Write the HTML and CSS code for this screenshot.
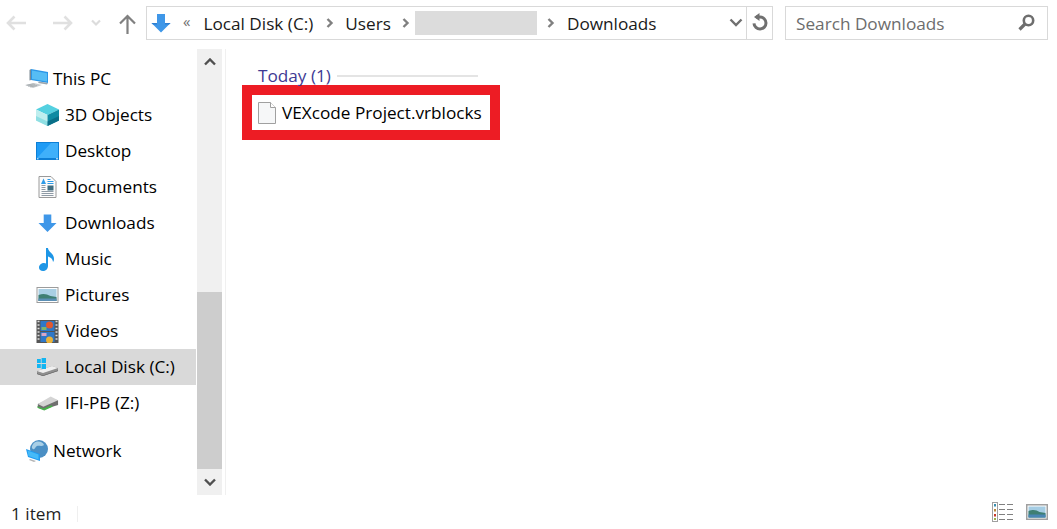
FILE: index.html
```html
<!DOCTYPE html>
<html lang="en">
<head>
<meta charset="utf-8">
<title>Downloads</title>
<link rel="stylesheet" href="styles.css">
</head>
<body>
<div class="window">
  <header class="toolbar">
    <div class="nav-buttons">
      <svg class="tb-icon back" width="22" height="20" viewBox="0 0 22 20"><path d="M21 10H2.500M9.500 3.500L3 10l6.500 6.500" fill="none" stroke="#e0e0e0" stroke-width="2.600"/></svg>
      <svg class="tb-icon forward" width="22" height="20" viewBox="0 0 22 20"><path d="M1 10h18.500M12.500 3.500L19 10l-6.500 6.500" fill="none" stroke="#e0e0e0" stroke-width="2.600"/></svg>
      <svg class="tb-icon recent" width="10" height="8" viewBox="0 0 10 8"><path d="M1 1.500l4 4 4-4" fill="none" stroke="#dcdcdc" stroke-width="2.200"/></svg>
      <svg class="tb-icon up" width="18" height="20" viewBox="0 0 18 20"><path d="M8.500 20V2M1 9.500L8.500 2 16 9.500" fill="none" stroke="#808080" stroke-width="2.200"/></svg>
    </div>
    <div class="address">
      <svg class="addr-loc" width="20" height="20" viewBox="0 0 20 20"><path d="M6 1h8v9h5.500L10 19.500 .5 10H6z" fill="#3f97e8"/><path d="M.5 10H6v1.500h-4zM19.500 10H14v1.500h4z" fill="#2f7fd0"/></svg>
      <span class="overflow">«</span>
      <span class="crumb first">Local Disk (C:)</span>
      <svg class="sep sep-a" width="8" height="10" viewBox="0 0 8 10"><path d="M1.500 1l4 4-4 4" fill="none" stroke="#808080" stroke-width="2.400"/></svg>
      <span class="crumb">Users</span>
      <svg class="sep sep-b" width="8" height="10" viewBox="0 0 8 10"><path d="M1.500 1l4 4-4 4" fill="none" stroke="#808080" stroke-width="2.400"/></svg>
      <span class="redacted"></span>
      <svg class="sep" width="8" height="10" viewBox="0 0 8 10"><path d="M1.500 1l4 4-4 4" fill="none" stroke="#808080" stroke-width="2.400"/></svg>
      <span class="crumb">Downloads</span>
      <svg class="addr-chevron" width="14" height="9" viewBox="0 0 14 9"><path d="M1.500 1.500L7 7l5.500-5.500" fill="none" stroke="#707070" stroke-width="2.400"/></svg>
      <div class="refresh">
        <svg width="18" height="20" viewBox="0 0 18 20"><path d="M5 4h4a6 6 0 1 1-6 6.300" fill="none" stroke="#707070" stroke-width="3"/><path d="M8.500 0v8L3 4z" fill="#707070"/></svg>
      </div>
    </div>
    <div class="search">
      <span class="search-text">Search Downloads</span>
      <svg width="17" height="17" viewBox="0 0 17 17"><circle cx="10.500" cy="6.500" r="4.700" fill="none" stroke="#6e6e6e" stroke-width="2.600"/><path d="M7 10l-5.500 5.500" stroke="#6e6e6e" stroke-width="3.200"/></svg>
    </div>
  </header>

  <div class="body">
    <nav class="sidebar">
      <ul class="tree">
        <li class="row root">
          <svg class="ico" width="26" height="22" viewBox="0 0 26 22"><path d="M7 1l17 3v11L7 12z" fill="#2c97e8"/><path d="M8 2.500l15 2.700v8.400L8 11z" fill="#56bdf5"/><path d="M7 1l-1.500 1v10.500L7 12z" fill="#7d8a94"/><path d="M24 15l-9-1.500-1 1.500 9 1.500z" fill="#9aa5ad"/><path d="M1 17l9-2 8 2-9 3z" fill="#c5cacd"/><path d="M2.500 17.300l7-1.500M4 18.200l7-1.500M6 19l7-1.500" stroke="#9ea3a6" stroke-width=".7"/></svg>
          <span class="label">This PC</span>
        </li>
        <li class="row">
          <svg class="ico" width="23" height="22" viewBox="0 0 23 22"><path d="M11.500 0L23 5.500 11.500 11 0 5.500z" fill="#54d0e0"/><path d="M0 5.500L11.500 11v11L0 16.500z" fill="#bfeeee"/><path d="M23 5.500L11.500 11v11L23 16.500z" fill="#0f8ba3"/><path d="M0 12l11.500 5.500V22L0 16.500z" fill="#8fdfe3"/><path d="M23 12l-11.500 5.500V22L23 16.500z" fill="#0a6f88"/></svg>
          <span class="label">3D Objects</span>
        </li>
        <li class="row">
          <svg class="ico" width="23" height="18" viewBox="0 0 23 18"><rect width="23" height="18" fill="#0d7fd6"/><rect x="1" y="1" width="21" height="15" fill="#1e9bf5"/><path d="M1 16L15 1h7v15z" fill="#3fb0fa"/><path d="M1 16.800h1.500M20 16.800h2" stroke="#e8f4fd" stroke-width="1"/></svg>
          <span class="label">Desktop</span>
        </li>
        <li class="row">
          <svg class="ico doc" width="18" height="22" viewBox="0 0 18 22"><path d="M.5.500h12l5 5v16H.5z" fill="#fbfbfb" stroke="#9a9a9a"/><path d="M9 3.500h3M9 5.500h6M9 7.500h6" stroke="#2d9be8"/><path d="M3 9.500h4M3 11.500h4M3 13.500h4M3 15.500h12M3 17.500h12M3 19.500h12" stroke="#8e9aa5"/><path d="M2.500 8l2.500-5.500L7.500 8z" fill="#2d9be8"/><rect x="9" y="9.500" width="6" height="5" fill="#3f6d80"/></svg>
          <span class="label">Documents</span>
        </li>
        <li class="row">
          <svg class="ico dl" width="20" height="20" viewBox="0 0 20 20"><path d="M6 1h8v9h5.500L10 19.500 .5 10H6z" fill="#3f97e8"/></svg>
          <span class="label">Downloads</span>
        </li>
        <li class="row">
          <svg class="ico note" width="17" height="23" viewBox="0 0 17 23"><path d="M7 0h2c0 4 6 5 6 11 0 1.500-.5 2.500-1 3 0-3-3-5-5-5.500V18c0 3-2.500 5-5 5S0 21.500 0 19.500C0 17 2.500 15 5 15c1 0 1.500.2 2 .5z" fill="#1e96e6"/></svg>
          <span class="label">Music</span>
        </li>
        <li class="row">
          <svg class="ico" width="22" height="16" viewBox="0 0 22 16"><rect x=".5" y=".5" width="21" height="15" fill="#fff" stroke="#9c9c9c"/><rect x="2" y="2" width="18" height="12" fill="#a9cfe4"/><path d="M2 8c5-2 8-1 12 1l6 1v4H2z" fill="#3f7f73"/><path d="M2 11.500h18V14H2z" fill="#5b8fb5"/></svg>
          <span class="label">Pictures</span>
        </li>
        <li class="row">
          <svg class="ico" width="22" height="23" viewBox="0 0 22 23"><rect width="22" height="23" fill="#555"/><path d="M1 1.500h2M1 5h2M1 8.500h2M1 12h2M1 15.500h2M1 19h2M19 1.500h2M19 5h2M19 8.500h2M19 12h2M19 15.500h2M19 19h2" stroke="#ddd" stroke-width="1.500"/><rect x="4" y="1" width="14" height="10" fill="#2f78c8"/><rect x="4" y="12" width="14" height="10" fill="#2f78c8"/><circle cx="13" cy="5" r="3.500" fill="#e2582e"/><circle cx="13" cy="20" r="3.500" fill="#e9b23a"/><rect x="5" y="7" width="5" height="3" fill="#7fb56b"/><rect x="5" y="13" width="5" height="3" fill="#d9a6c6"/></svg>
          <span class="label">Videos</span>
        </li>
        <li class="row selected">
          <svg class="ico" width="23" height="18" viewBox="0 0 23 18"><path d="M1 13l15-5 6 2v3L7 18l-6-2z" fill="#8f8f8f"/><path d="M1 13l15-5 6 2-15 5z" fill="#efefef"/><path d="M1 15.500L7 17.500 22 12.500V13L7 18l-6-2z" fill="#555"/><path d="M1 1h3.800v4H1zM5.600 0H10v5H5.600zM1 6h3.800v4H1zM5.600 6H10v5H5.600z" fill="#12b5f2"/></svg>
          <span class="label">Local Disk (C:)</span>
        </li>
        <li class="row">
          <svg class="ico" width="25" height="17" viewBox="0 0 25 17"><path d="M2 9l14-6 8 2v5L8 15l-6-2z" fill="#6f6f6f"/><path d="M2 9l14-8 8 4-16 7z" fill="#d4d4d4"/><path d="M1 11.500l7 2.500 9-3.500 1 1.500-9 4-7-2.500z" fill="#47b04a"/></svg>
          <span class="label">IFI-PB (Z:)</span>
        </li>
        <li class="row root network">
          <svg class="ico" width="24" height="22" viewBox="0 0 24 22"><circle cx="14" cy="9" r="9" fill="#4b8fc4"/><path d="M9 3c4-3 9-1 10 2-3 2-5 0-7 1s-2 4-4 3-1-4 1-6z" fill="#a8cfe6"/><path d="M1 9l14 5v7L3 17z" fill="#1f9af0"/><path d="M2.500 10.500l11 4v5l-10-3.500z" fill="#45baf8"/><path d="M5 19l6 2-2 1-5-2z" fill="#b5b5b5"/></svg>
          <span class="label">Network</span>
        </li>
      </ul>
      <div class="scrollbar">
        <button class="sb-btn" aria-label="Up"><svg width="12" height="8" viewBox="0 0 12 8"><path d="M1 6.500l5-5 5 5" fill="none" stroke="#505050" stroke-width="2.400"/></svg></button>
        <div class="sb-track"><div class="sb-thumb"></div></div>
        <button class="sb-btn" aria-label="Down"><svg width="12" height="8" viewBox="0 0 12 8"><path d="M1 1.500l5 5 5-5" fill="none" stroke="#505050" stroke-width="2.400"/></svg></button>
      </div>
    </nav>

    <main class="content">
      <div class="group-head">
        <span class="group-title">Today (1)</span>
        <i class="group-line"></i>
      </div>
      <div class="file">
        <svg width="18" height="22" viewBox="0 0 18 22"><path d="M.5.500h12l5 5v16H.5z" fill="#f6f7f8" stroke="#a0a0a0"/><path d="M12.500.500v5h5" fill="#fff" stroke="#a0a0a0"/></svg>
        <span>VEXcode Project.vrblocks</span>
      </div>
    </main>
  </div>

  <footer class="status">
    <span class="count">1 item</span>
    <i class="status-div"></i>
    <div class="views">
      <svg width="21" height="20" viewBox="0 0 21 20"><rect x=".5" y=".5" width="5" height="19" fill="#fff" stroke="#a0a0a0"/><rect x="2" y="2" width="2" height="2.500" fill="#3a8fb0"/><rect x="2" y="7" width="2" height="2.500" fill="#b8863a"/><rect x="2" y="12" width="2" height="2.500" fill="#c83a2a"/><rect x="2" y="16" width="2" height="2" fill="#9ab04a"/><path d="M7 2.500h6M15 2.500h6M7 7.500h6M15 7.500h6M7 12.500h6M15 12.500h6M7 17.500h6M15 17.500h6" stroke="#808080"/></svg>
      <svg width="22" height="16" viewBox="0 0 22 16"><rect x=".75" y=".75" width="20.500" height="14.500" fill="#fff" stroke="#a0a0a0" stroke-width="1.500"/><rect x="2.500" y="2.500" width="17" height="11" fill="#a5cde4"/><path d="M2.500 7c5-2 8-1 11 1l6 1v4.500h-17z" fill="#3f7f73"/><path d="M2.500 10.500h17v3h-17z" fill="#4a86b5"/></svg>
    </div>
  </footer>
</div>
</body>
</html>
```

FILE: styles.css
```css
* { box-sizing: border-box; }

html, body {
  margin: 0;
  height: 100%;
  background: #fff;
}

body {
  font-family: "Open Sans", "Noto Sans", "Liberation Sans", sans-serif;
  font-size: 17.200px;
  color: #000;
  overflow: hidden;
}

.window {
  display: flex;
  flex-direction: column;
  height: 529px;
  width: 1057px;
}

/* toolbar */
.toolbar {
  display: flex;
  align-items: center;
  height: 49px;
  padding: 6px 9px 10px 0;
  flex: none;
}

.nav-buttons {
  display: flex;
  align-items: center;
  width: 146px;
  padding-left: 5px;
  flex: none;
}

.tb-icon { display: block; flex: none; }
.forward { margin-left: 25px; }
.recent { margin-left: 17px; }
.up { margin-left: 18px; margin-top: 3px; }

.address {
  display: flex;
  align-items: center;
  width: 627px;
  height: 34px;
  border: 1px solid #d9d9d9;
  flex: none;
}

.addr-loc { margin-left: 4px; flex: none; }
.overflow { margin-left: 12px; font-size: 15px; color: #707070; line-height: 1; margin-top: -3px; }
.crumb { white-space: nowrap; color: #1a1a1a; padding-top: 2px; }
.crumb.first { margin-left: 13px; }
.sep { margin: 0 12px 0 13px; flex: none; }
.sep-a { margin-right: 11px; }
.sep-b { margin-left: 11px; }
.redacted {
  width: 122px;
  height: 24px;
  background: #dcdcdc;
  margin-left: -7px;
  margin-right: -3px;
}
.addr-chevron { margin-left: auto; margin-right: 3px; flex: none; }

.refresh {
  width: 26px;
  height: 100%;
  border-left: 1px solid #d9d9d9;
  display: flex;
  align-items: center;
  justify-content: center;
  flex: none;
}

.search {
  display: flex;
  align-items: center;
  justify-content: space-between;
  margin-left: 12px;
  flex: 1;
  height: 34px;
  padding: 0 12px 0 10px;
  border: 1px solid #d9d9d9;
  color: #6d6d6d;
}

.search-text { padding-top: 2px; }

/* body */
.body {
  display: flex;
  flex: 1;
  min-height: 0;
}

.sidebar {
  display: flex;
  width: 226px;
  flex: none;
  border-right: 1px solid #f0f0f0;
}

.tree {
  list-style: none;
  margin: 0;
  padding: 12px 0 0;
  width: 197px;
  flex: none;
}

.row {
  display: flex;
  align-items: center;
  height: 36px;
  padding-left: 36px;
  width: 196px;
  white-space: nowrap;
}

.label { padding-bottom: 2px; }

.row.root { padding-left: 24px; }
.row.network { margin-top: 12px; }
.row.selected { background: #d9d9d9; }

.ico { flex: none; margin-right: 6px; width: 23px; }
.root .ico { margin-right: 3px; width: 26px; }
.doc, .dl, .note { padding: 0 2px; }

.scrollbar {
  width: 25px;
  background: #f0f0f0;
  display: flex;
  flex-direction: column;
  flex: none;
}

.sb-btn {
  height: 26px;
  padding: 0;
  border: 0;
  background: transparent;
  display: flex;
  align-items: center;
  justify-content: center;
  flex: none;
}

.sb-track {
  flex: 1;
  display: flex;
  flex-direction: column;
  justify-content: flex-end;
}

.sb-thumb {
  height: 177px;
  background: #cdcdcd;
}

/* content */
.content {
  flex: 1;
  padding: 15px 0 0 16px;
}

.group-head {
  display: flex;
  align-items: center;
  height: 24px;
  padding-left: 16px;
  color: #3e3a94;
}

.group-title { padding-bottom: 2px; }

.group-line {
  width: 141px;
  height: 2px;
  background: #e4e4e4;
  margin-left: 6px;
}

.file {
  display: flex;
  align-items: center;
  gap: 6px;
  width: 258px;
  height: 55px;
  margin-top: -3px;
  padding-left: 6px;
  border: 10px solid #ed1c24;
  white-space: nowrap;
}

/* status */
.status {
  display: flex;
  align-items: center;
  height: 34px;
  padding: 2px 9px 0 11px;
  flex: none;
}

.count { color: #1f1f1f; }

.status-div {
  width: 1px;
  height: 16px;
  background: #efefef;
  margin: 2px 0 0 16px;
}

.views {
  margin-left: auto;
  display: flex;
  align-items: center;
  gap: 13px;
  margin-top: -2px;
}
```
